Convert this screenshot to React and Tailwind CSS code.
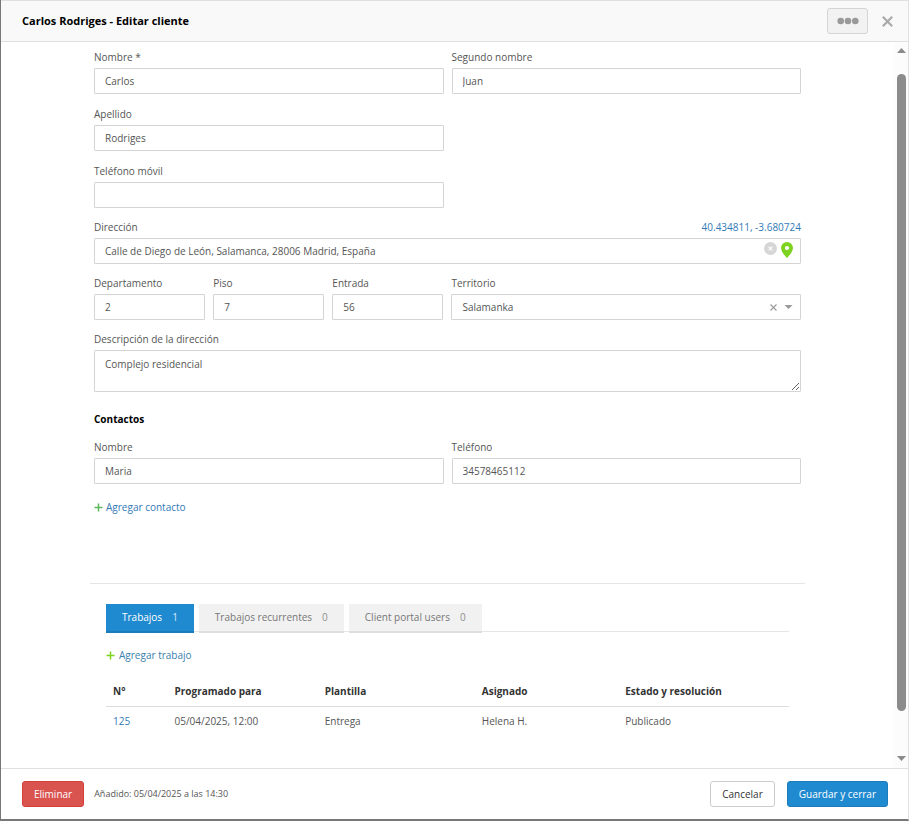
import React, { useState } from "react";

const inputClass =
  "block w-full h-[26px] px-2.5 border border-[#d4d4d4] rounded-[1px] bg-white text-[#555] outline-none focus:border-[#1f8ad0]";

const tabs = [
  { id: "jobs", name: "Trabajos", count: 1 },
  { id: "recurring", name: "Trabajos recurrentes", count: 0 },
  { id: "portal", name: "Client portal users", count: 0 },
];

const jobs = [
  {
    number: 125,
    date: "05/04/2025, 12:00",
    template: "Entrega",
    assigned: "Helena H.",
    status: "Publicado",
  },
];

const Field = ({ id, label, className, extra, children }) => (
  <div className={className}>
    <div className="flex justify-between mb-0.5 leading-[18px]">
      <label htmlFor={id}>{label}</label>
      {extra}
    </div>
    {children}
  </div>
);

const PlusIcon = ({ className }) => (
  <svg width="9" height="9" viewBox="0 0 9 9" className={className}>
    <path d="M4.5 0.5v8M0.5 4.5h8" stroke="currentColor" strokeWidth="1.5" />
  </svg>
);

const ScrollBar = () => (
  <div className="w-3.5 shrink-0 flex flex-col items-center bg-[#fcfcfc] pt-1.5 pb-[7px]">
    <svg width="9" height="5" viewBox="0 0 9 5" className="text-[#8b8b8b]">
      <path d="M4.5 0L9 5H0z" fill="currentColor" />
    </svg>
    <div className="flex-1 w-[9px] pt-[21px] pb-[45px] flex">
      <div className="w-full rounded-full bg-[#8b8b8b]" />
    </div>
    <svg width="9" height="5" viewBox="0 0 9 5" className="text-[#8b8b8b]">
      <path d="M0 0h9L4.5 5z" fill="currentColor" />
    </svg>
  </div>
);

const App = () => {
  const [form, setForm] = useState({
    name: "Carlos",
    secondName: "Juan",
    surname: "Rodriges",
    mobile: "",
    address: "Calle de Diego de León, Salamanca, 28006 Madrid, España",
    apartment: "2",
    floor: "7",
    entrance: "56",
    territory: "Salamanka",
    description: "Complejo residencial",
    contactName: "Maria",
    contactPhone: "34578465112",
  });
  const [activeTab, setActiveTab] = useState("jobs");

  const bind = (key) => ({
    id: key,
    name: key,
    value: form[key],
    onChange: (e) => setForm((prev) => ({ ...prev, [key]: e.target.value })),
  });

  const clear = (key) => setForm((prev) => ({ ...prev, [key]: "" }));

  return (
    <div className="min-h-screen flex flex-col border-l border-l-[#777] border-r border-r-[#e0e0e0] border-b-2 border-b-[#777] bg-white text-[10px] text-[#555] font-['Open_Sans',sans-serif]">
      {/* Header */}
      <header className="h-[42px] flex items-center pl-[21px] pr-[15px] bg-[#f9f9f9] border-y border-[#e0e0e0]">
        <h1 className="flex-1 text-[11px] font-bold text-black">
          Carlos Rodriges - Editar cliente
        </h1>
        <button
          type="button"
          aria-label="Más acciones"
          className="w-[41px] h-[26px] flex items-center justify-center rounded-[3px] border border-[#d5d5d5] bg-[#f2f2f2] text-[#999]"
        >
          <svg width="22" height="8" viewBox="0 0 22 8" fill="currentColor">
            <circle cx="3.7" cy="4" r="3.3" />
            <circle cx="11" cy="4" r="3.3" />
            <circle cx="18.3" cy="4" r="3.3" />
          </svg>
        </button>
        <button type="button" aria-label="Cerrar" className="ml-3.5 text-[#aaa]">
          <svg width="11" height="11" viewBox="0 0 11 11">
            <path d="M0.8 0.8l9.4 9.4M10.2 0.8L0.8 10.2" stroke="currentColor" strokeWidth="2.2" />
          </svg>
        </button>
      </header>

      <div className="flex-1 flex">
        <main className="flex-1 min-w-0 px-5">
          <form className="max-w-[707px] mx-auto pt-1.5">
            {/* Client */}
            <div className="grid grid-cols-2 gap-x-2 gap-y-[11px]">
              <Field id="name" label="Nombre *">
                <input type="text" className={inputClass} {...bind("name")} />
              </Field>
              <Field id="secondName" label="Segundo nombre">
                <input type="text" className={inputClass} {...bind("secondName")} />
              </Field>
              <Field id="surname" label="Apellido" className="col-start-1">
                <input type="text" className={inputClass} {...bind("surname")} />
              </Field>
              <Field id="mobile" label="Teléfono móvil" className="col-start-1">
                <input type="tel" className={inputClass} {...bind("mobile")} />
              </Field>
            </div>

            {/* Address */}
            <div className="grid grid-cols-6 gap-x-2 gap-y-2.5 mt-2.5">
              <Field
                id="address"
                label="Dirección"
                className="col-span-6"
                extra={
                  <a href="#map" className="text-[#337ab7]">
                    40.434811, -3.680724
                  </a>
                }
              >
                <div className="relative">
                  <input type="text" className={inputClass} {...bind("address")} />
                  <div className="absolute top-1 right-2 flex items-start gap-1">
                    <button
                      type="button"
                      aria-label="Borrar dirección"
                      onClick={() => clear("address")}
                    >
                      <svg width="13" height="13" viewBox="0 0 13 13">
                        <circle cx="6.5" cy="6.5" r="6.5" fill="#d6d6d6" />
                        <path d="M4.6 4.6l3.8 3.8M8.4 4.6L4.6 8.4" stroke="#fff" strokeWidth="1.2" />
                      </svg>
                    </button>
                    <svg width="12" height="16" viewBox="0 0 12 16">
                      <path
                        d="M6 0a6 6 0 0 0-6 6c0 4.2 6 10 6 10s6-5.8 6-10a6 6 0 0 0-6-6zm0 8.1a2.1 2.1 0 1 1 0-4.2 2.1 2.1 0 0 1 0 4.2z"
                        fill="#7ed321"
                      />
                    </svg>
                  </div>
                </div>
              </Field>
              <Field id="apartment" label="Departamento">
                <input type="text" className={inputClass} {...bind("apartment")} />
              </Field>
              <Field id="floor" label="Piso">
                <input type="text" className={inputClass} {...bind("floor")} />
              </Field>
              <Field id="entrance" label="Entrada">
                <input type="text" className={inputClass} {...bind("entrance")} />
              </Field>
              <Field id="territory" label="Territorio" className="col-span-3">
                <div className="relative">
                  <select className={`${inputClass} appearance-none`} {...bind("territory")}>
                    <option value=""></option>
                    <option value="Salamanka">Salamanka</option>
                  </select>
                  <div className="absolute top-0 right-2 h-full flex items-center gap-[7px] text-[#999] pointer-events-none">
                    <button
                      type="button"
                      aria-label="Borrar territorio"
                      className="pointer-events-auto"
                      onClick={() => clear("territory")}
                    >
                      <svg width="7" height="7" viewBox="0 0 7 7">
                        <path d="M0.5 0.5l6 6M6.5 0.5l-6 6" stroke="currentColor" strokeWidth="1.1" />
                      </svg>
                    </button>
                    <svg width="9" height="4" viewBox="0 0 9 4">
                      <path d="M0.5 0h8L4.5 4z" fill="currentColor" />
                    </svg>
                  </div>
                </div>
              </Field>
              <Field
                id="description"
                label="Descripción de la dirección"
                className="col-span-6"
              >
                <textarea
                  className="block w-full h-[42px] px-2.5 py-1 leading-[18px] border border-[#d4d4d4] rounded-[1px] outline-none focus:border-[#1f8ad0]"
                  {...bind("description")}
                />
              </Field>
            </div>

            {/* Contacts */}
            <h2 className="mt-[18px] mb-2.5 leading-[18px] font-bold text-black">
              Contactos
            </h2>
            <div className="grid grid-cols-2 gap-x-2">
              <Field id="contactName" label="Nombre">
                <input type="text" className={inputClass} {...bind("contactName")} />
              </Field>
              <Field id="contactPhone" label="Teléfono">
                <input type="tel" className={inputClass} {...bind("contactPhone")} />
              </Field>
            </div>
            <a
              href="#add-contact"
              className="inline-flex items-center gap-[3px] mt-3.5 leading-[18px] text-[#337ab7]"
            >
              <PlusIcon className="text-[#5cb85c]" />
              Agregar contacto
            </a>
          </form>

          {/* Jobs */}
          <section className="max-w-[715px] mx-auto mt-[67px] px-4 pt-5 border-t border-[#e5e5e5]">
            <div className="flex gap-[5px] h-7 border-b border-[#e5e5e5]" role="tablist">
              {tabs.map((t) => (
                <button
                  key={t.id}
                  type="button"
                  role="tab"
                  aria-selected={activeTab === t.id}
                  onClick={() => setActiveTab(t.id)}
                  className={`h-[29px] shrink-0 px-4 flex items-center gap-2.5 border-b-2 ${
                    activeTab === t.id
                      ? "bg-[#1f8ad0] border-[#1c7cbb] text-white"
                      : "bg-[#f1f1f1] border-[#dedede] text-[#777]"
                  }`}
                >
                  {t.name}
                  <span className="opacity-80">{t.count}</span>
                </button>
              ))}
            </div>

            <a
              href="#add-job"
              className="inline-flex items-center gap-1 mt-3.5 leading-[18px] text-[#3a80ab]"
            >
              <PlusIcon className="text-[#7ed321]" />
              Agregar trabajo
            </a>

            <table className="w-full table-fixed mt-3.5 text-left">
              <thead className="text-[#333]">
                <tr className="h-7 border-b border-[#dcdcdc]">
                  <th className="w-[9%] pl-[7px] font-bold">N°</th>
                  <th className="w-[22%] pl-[7px] font-bold">Programado para</th>
                  <th className="w-[23%] pl-[7px] font-bold">Plantilla</th>
                  <th className="w-[21%] pl-[7px] font-bold">Asignado</th>
                  <th className="w-[25%] pl-[7px] font-bold">Estado y resolución</th>
                </tr>
              </thead>
              <tbody>
                {jobs.map((job) => (
                  <tr key={job.number} className="h-[30px]">
                    <td className="pl-[7px]">
                      <a href="#job" className="text-[#337ab7]">
                        {job.number}
                      </a>
                    </td>
                    <td className="pl-[7px]">{job.date}</td>
                    <td className="pl-[7px]">{job.template}</td>
                    <td className="pl-[7px]">{job.assigned}</td>
                    <td className="pl-[7px]">{job.status}</td>
                  </tr>
                ))}
              </tbody>
            </table>
          </section>
        </main>
        <ScrollBar />
      </div>

      {/* Footer */}
      <footer className="h-[51px] flex items-center pl-[21px] pr-5 border-t border-[#e0e0e0]">
        <button
          type="button"
          className="h-[26px] px-[11px] rounded-[3px] border border-[#d43f3a] bg-[#d9534f] text-white"
        >
          Eliminar
        </button>
        <span className="ml-2.5 text-[9px]">Añadido: 05/04/2025 a las 14:30</span>
        <button
          type="button"
          className="ml-auto h-[26px] px-[11px] rounded-[3px] border border-[#ccc] bg-white text-[#333]"
        >
          Cancelar
        </button>
        <button
          type="button"
          className="ml-3 h-[26px] px-[11px] rounded-[3px] border border-[#1c7cbb] bg-[#1f8ad0] text-white"
        >
          Guardar y cerrar
        </button>
      </footer>
    </div>
  );
};

export default App;
